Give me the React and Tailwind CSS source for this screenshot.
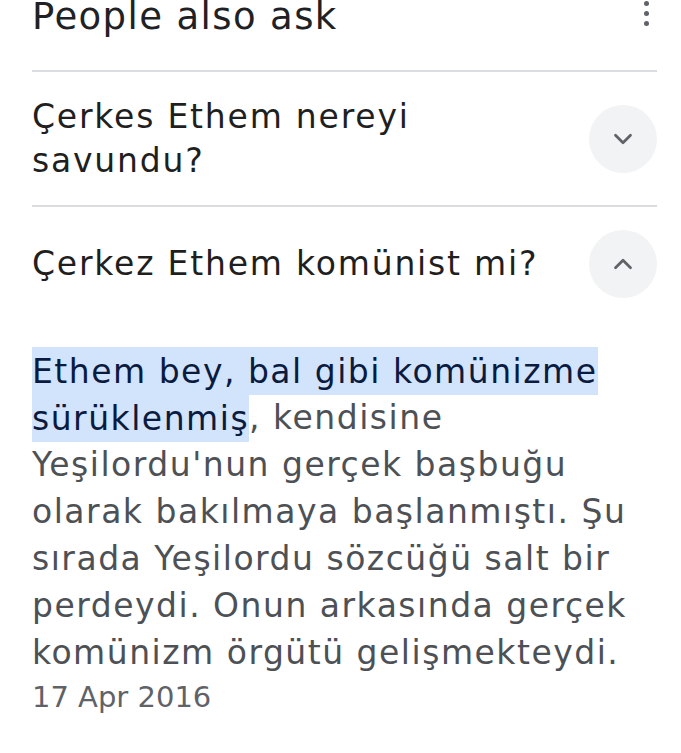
import React from "react";
import { ChevronDown, ChevronUp } from "lucide-react";

const Toggle = ({ open }) => (
  <div className="w-[68px] h-[68px] shrink-0 rounded-full bg-[#f1f3f4] flex items-center justify-center text-[#5f6368]">
    {open ? <ChevronUp size={30} strokeWidth={2.2} /> : <ChevronDown size={30} strokeWidth={2.2} />}
  </div>
);

export default function App() {
  return (
    <div className="w-[681px] h-[753px] bg-white overflow-hidden font-['DejaVu_Sans',sans-serif] text-[#202124]">
      <div className="pl-8 pr-6">
        {/* header */}
        <div className="flex justify-between items-start h-[72px] border-b-2 border-[#dadce0]">
          <h2 className="text-[37px] leading-[40px] -mt-[3px] tracking-[1.4px]">People also ask</h2>
          <div className="flex flex-col gap-[5px] items-center pt-[1px] pr-[8px]">
            <span className="w-[5px] h-[5px] rounded-full bg-[#5f6368]" />
            <span className="w-[5px] h-[5px] rounded-full bg-[#5f6368]" />
            <span className="w-[5px] h-[5px] rounded-full bg-[#5f6368]" />
          </div>
        </div>

        {/* question 1 */}
        <div className="flex justify-between items-center h-[135px] border-b-2 border-[#dadce0]">
          <p className="text-[33px] leading-[44px] tracking-[1.8px] text-[#1f1f1f] w-[460px]">
            Çerkes Ethem nereyi savundu?
          </p>
          <Toggle />
        </div>

        {/* question 2 */}
        <div className="flex justify-between items-center h-[114px]">
          <p className="text-[33px] leading-[44px] tracking-[1.8px] text-[#1f1f1f]">
            Çerkez Ethem komünist mi?
          </p>
          <Toggle open />
        </div>

        {/* answer */}
        <div className="pt-[26px] pr-[20px]">
          <p className="text-[33px] leading-[47px] tracking-[1.5px] text-[#4d5156]">
            <span className="bg-[#d2e3fc] text-[#0b1b3f] py-[4.5px]">
              Ethem bey, bal gibi komünizme sürüklenmiş
            </span>
            , kendisine Yeşilordu'nun gerçek başbuğu olarak bakılmaya başlanmıştı. Şu sırada Yeşilordu sözcüğü salt bir perdeydi. Onun arkasında gerçek komünizm örgütü gelişmekteydi.
          </p>
          <p className="text-[29px] leading-[42px] text-[#5f6368]">17 Apr 2016</p>
        </div>
      </div>
    </div>
  );
}
